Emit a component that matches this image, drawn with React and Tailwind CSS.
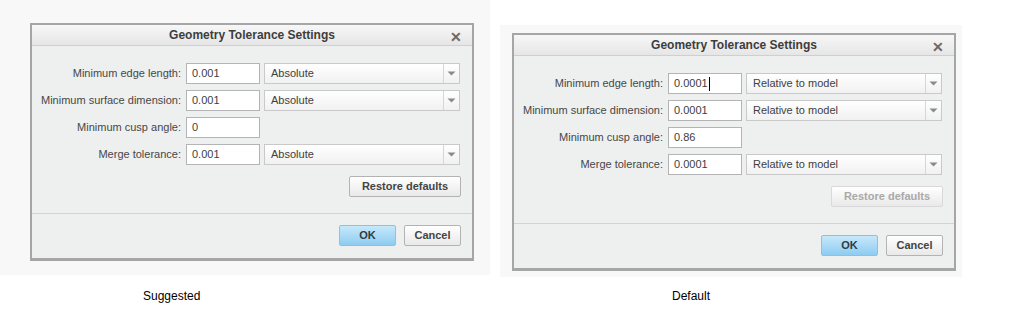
import React from 'react';

const font = { fontFamily: '"Liberation Sans", Arial, sans-serif' };

const Arrow = () => (
  <svg width="9" height="5" viewBox="0 0 9 5"><path d="M0.5 0.5 H8.5 L4.5 4.5 Z" fill="#8a8a8a" /></svg>
);

const Select = ({ value }) => (
  <div className="flex h-[21px] w-[196px] border border-[#c9c9c9] bg-gradient-to-b from-white to-[#f1f1f1]">
    <div className="flex-1 pl-[6px] leading-[19px] text-[#404040]">{value}</div>
    <div className="flex w-[16px] items-center justify-center border-l border-[#d6d6d6]">
      <Arrow />
    </div>
  </div>
);

const Row = ({ label, value, mode, caret }) => (
  <div className="flex items-center">
    <div className="w-[154px] whitespace-nowrap pr-[5px] text-right text-[#474747]">{label}</div>
    <div className="flex h-[21px] w-[74px] items-center border border-[#b4b4b4] bg-white pl-[5px] text-[#404040]">
      {value}
      {caret && <span className="ml-px inline-block h-[14px] w-px bg-black" />}
    </div>
    {mode && <div className="ml-[4px]"><Select value={mode} /></div>}
  </div>
);

const Dialog = ({ mode, values, disabled }) => (
  <div className="w-[444px] border-2 border-b-[3px] border-[#a6a6a6] bg-[#eeefef] text-[11px]" style={font}>
    <div className="relative flex h-[21px] items-center justify-center border-b border-[#cfcfcf] bg-gradient-to-b from-[#f7f7f7] to-[#e6e6e6]">
      <span className="text-[12px] font-bold text-[#3d3d3d]">Geometry Tolerance Settings</span>
      <span className="absolute right-[10px] top-[2px] text-[14px] font-bold text-[#6a6a6a]">✕</span>
    </div>
    <div className="flex flex-col gap-[6px] pr-[11px] pt-[17px]">
      <Row label="Minimum edge length:" value={values[0]} mode={mode} caret={disabled} />
      <Row label="Minimum surface dimension:" value={values[1]} mode={mode} />
      <Row label="Minimum cusp angle:" value={values[2]} />
      <Row label="Merge tolerance:" value={values[3]} mode={mode} />
    </div>
    <div className="flex justify-end pr-[11px] pt-[11px] pb-[16px]">
      <button
        className={
          'h-[21px] w-[112px] rounded-[2px] border bg-gradient-to-b from-white to-[#e9e9e9] font-bold ' +
          (disabled ? 'border-[#d9d9d9] text-[#a9a9a9]' : 'border-[#b3b3b3] text-[#444]')
        }
      >
        Restore defaults
      </button>
    </div>
    <div className="flex justify-end gap-[8px] border-t border-[#d3d3d3] pt-[11px] pb-[12px] pr-[11px]">
      <button className="h-[21px] w-[57px] rounded-[2px] border border-[#86c3ea] bg-gradient-to-b from-[#c6e8fb] to-[#8dccf1] font-bold text-[#2f3a44]">
        OK
      </button>
      <button className="h-[21px] w-[57px] rounded-[2px] border border-[#b3b3b3] bg-gradient-to-b from-white to-[#e9e9e9] font-bold text-[#444]">
        Cancel
      </button>
    </div>
  </div>
);

export default function App() {
  return (
    <div className="flex h-[334px] w-[1015px] bg-white" style={font}>
      <div className="w-[500px]">
        <div className="h-[275px] w-[490px] bg-[#f8f8f8] pl-[30px] pt-[23px]">
          <Dialog mode="Absolute" values={['0.001', '0.001', '0', '0.001']} />
        </div>
        <div className="pl-[143px] pt-[12px] text-[12px] text-black">Suggested</div>
      </div>
      <div>
        <div className="mt-[25px] h-[252px] w-[462px] bg-[#f8f8f8] pl-[12px] pt-[8px]">
          <Dialog mode="Relative to model" values={['0.0001', '0.0001', '0.86', '0.0001']} disabled />
        </div>
        <div className="pl-[172px] pt-[10px] text-[12px] text-black">Default</div>
      </div>
    </div>
  );
}
